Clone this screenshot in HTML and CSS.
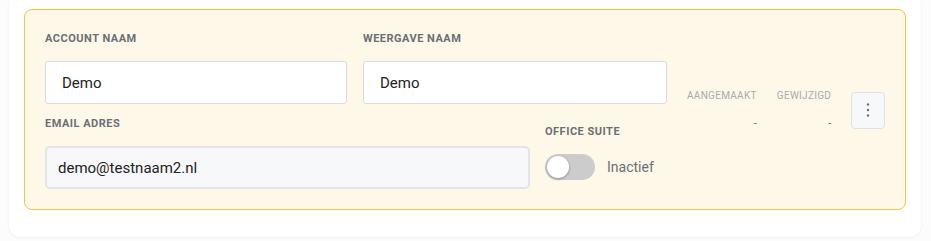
FILE: index.html
```html
<!DOCTYPE html>
<html lang="nl">
<head>
    <meta charset="UTF-8">
    <meta name="viewport" content="width=device-width, initial-scale=1.0">
    <title>Account</title>
    <link rel="stylesheet" href="styles.css">
</head>
<body>
    <div class="page">
        <div class="card">
            <div class="account-row">
                <div class="fields">
                    <div class="field">
                        <label class="field-label">Account naam</label>
                        <input class="text-input" type="text" value="Demo">
                    </div>
                    <div class="field">
                        <label class="field-label">Weergave naam</label>
                        <input class="text-input" type="text" value="Demo">
                    </div>
                    <div class="field">
                        <label class="field-label">Email adres</label>
                        <input class="text-input readonly" type="text" value="demo@testnaam2.nl" readonly>
                    </div>
                    <div class="field office">
                        <label class="field-label">Office suite</label>
                        <div class="toggle-row">
                            <span class="toggle"><span class="knob"></span></span>
                            <span class="toggle-text">Inactief</span>
                        </div>
                    </div>
                </div>

                <div class="meta">
                    <div class="meta-item">
                        <div class="meta-label">Aangemaakt</div>
                        <div class="meta-value">-</div>
                    </div>
                    <div class="meta-item">
                        <div class="meta-label">Gewijzigd</div>
                        <div class="meta-value">-</div>
                    </div>
                </div>

                <button class="menu-btn" type="button" aria-label="Meer">
                    <svg width="4" height="14" viewBox="0 0 4 14">
                        <circle cx="2" cy="1.5" r="1.2" fill="#6b6f78"/>
                        <circle cx="2" cy="7" r="1.2" fill="#6b6f78"/>
                        <circle cx="2" cy="12.5" r="1.2" fill="#6b6f78"/>
                    </svg>
                </button>
            </div>
        </div>
    </div>
</body>
</html>
```

FILE: styles.css
```css
body {
    margin: 0;
    background-color: #fcfcfc;
    font-family: Roboto, 'Liberation Sans', Arial, sans-serif;
    color: #222;
}
.page {
    padding: 0 10px 5px 9px;
}
.card {
    margin-top: -6px;
    background-color: #fff;
    border-radius: 12px;
    box-shadow: 0 1px 3px rgba(0, 0, 0, 0.06);
    padding: 15px 15px 27px 15px;
}
.account-row {
    display: flex;
    align-items: center;
    background-color: #fef8e8;
    border: 1px solid #f5c443;
    border-radius: 8px;
    padding: 21px 20px 20px 20px;
}
.fields {
    display: grid;
    grid-template-columns: 302px 167px 121px;
    column-gap: 16px;
    row-gap: 12px;
    width: 622px;
}
.field {
    display: flex;
    flex-direction: column;
}
.field:nth-child(1) {
    grid-column: 1;
}
.field:nth-child(2) {
    grid-column: 2 / 4;
}
.field:nth-child(3) {
    grid-column: 1 / 3;
}
.field-label {
    font-size: 11px;
    font-weight: 700;
    line-height: 16px;
    letter-spacing: 0.5px;
    text-transform: uppercase;
    color: #6c6f75;
    margin-bottom: 14px;
}
.text-input {
    box-sizing: border-box;
    height: 43px;
    width: 100%;
    padding: 0 16px;
    border: 1px solid #dcdce0;
    border-radius: 3px;
    background-color: #fff;
    font-family: inherit;
    font-size: 15px;
    color: #222;
    outline: none;
}
.text-input.readonly {
    border: 2px solid #e2e4ea;
    border-radius: 5px;
    background-color: #f7f8fa;
    padding: 0 11px;
}
.office {
    align-self: center;
    margin-left: -1px;
}
.office .field-label {
    margin-bottom: 12px;
}
.toggle-row {
    display: flex;
    align-items: center;
    height: 30px;
    gap: 12px;
}
.toggle {
    position: relative;
    width: 50px;
    height: 26px;
    border-radius: 13px;
    background-color: #cccccc;
}
.knob {
    position: absolute;
    left: 2px;
    top: 2px;
    width: 22px;
    height: 22px;
    border-radius: 50%;
    background-color: #fff;
    box-shadow: 0 1px 3px rgba(0, 0, 0, 0.3);
}
.toggle-text {
    font-size: 14px;
    color: #6c6f75;
}
.meta {
    display: flex;
    gap: 20px;
    margin-left: 20px;
}
.meta-item {
    text-align: right;
}
.meta-label {
    font-size: 10px;
    line-height: 14px;
    letter-spacing: 0.3px;
    text-transform: uppercase;
    color: #a9abb0;
}
.meta-value {
    margin-top: 14px;
    font-size: 11px;
    line-height: 14px;
    color: #666;
}
.menu-btn {
    display: flex;
    align-items: center;
    justify-content: center;
    box-sizing: border-box;
    width: 34px;
    height: 37px;
    margin-left: 20px;
    padding: 0;
    background-color: #f7f8fa;
    border: 1px solid #e0e1e6;
    border-radius: 4px;
    cursor: pointer;
}
```
